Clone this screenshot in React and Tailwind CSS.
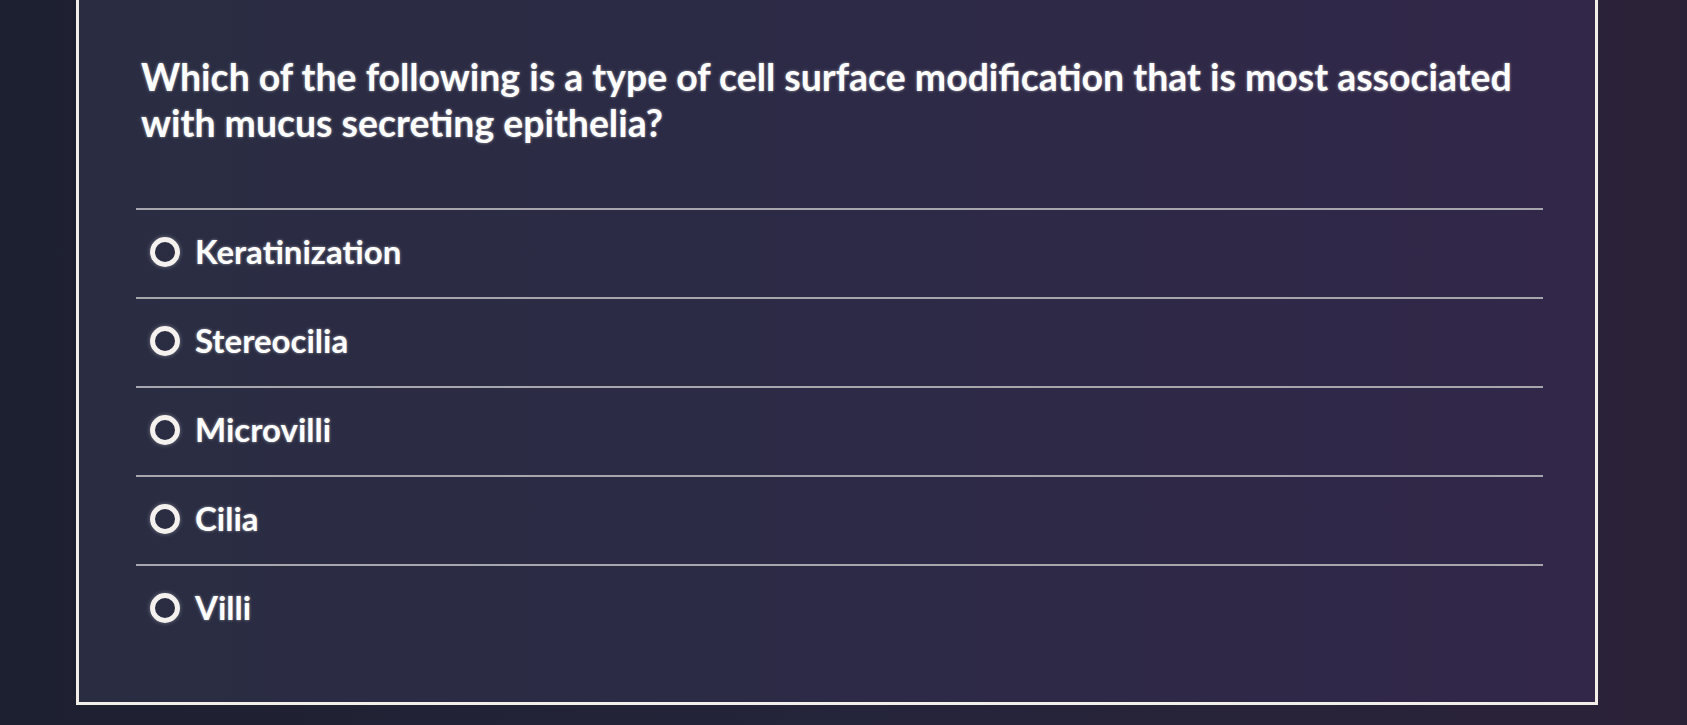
import React from "react";

const options = ["Keratinization", "Stereocilia", "Microvilli", "Cilia", "Villi"];

function Radio() {
  return (
    <span className="w-[30px] h-[30px] rounded-full border-[5px] border-[#f4f1ee] shrink-0 shadow-[0_0_4px_rgba(255,255,255,0.35)]" />
  );
}

export default function App() {
  return (
    <div
      className="w-[1687px] h-[725px] overflow-hidden bg-gradient-to-r from-[#1d2030] via-[#24243a] to-[#2b2238]"
      style={{ fontFamily: "Lato, 'Open Sans', sans-serif" }}
    >
      <div className="ml-[76px] w-[1522px] h-[705px] border-[3px] border-t-0 border-[#f2efe9] bg-gradient-to-r from-[#2a2d42] via-[#2c2a46] to-[#322749] flex flex-col">
        <div className="pl-[62px] pr-[20px] pt-[54px]">
          <h1 className="text-[37.4px] leading-[46px] font-bold text-white whitespace-nowrap [text-shadow:0_0_3px_rgba(255,255,255,0.55)]">
            Which of the following is a type of cell surface modification that is most associated
            <br />
            with mucus secreting epithelia?
          </h1>
        </div>
        <div className="pl-[57px] pr-[52px] mt-[62px]">
          {options.map((o) => (
            <div key={o} className="border-t-2 border-[#a7a6ad] h-[89px] flex items-center gap-[15px] pl-[14px] pb-[4px]">
              <Radio />
              <span className="text-[33px] font-bold text-white [text-shadow:0_0_3px_rgba(255,255,255,0.55)]">
                {o}
              </span>
            </div>
          ))}
        </div>
      </div>
    </div>
  );
}
